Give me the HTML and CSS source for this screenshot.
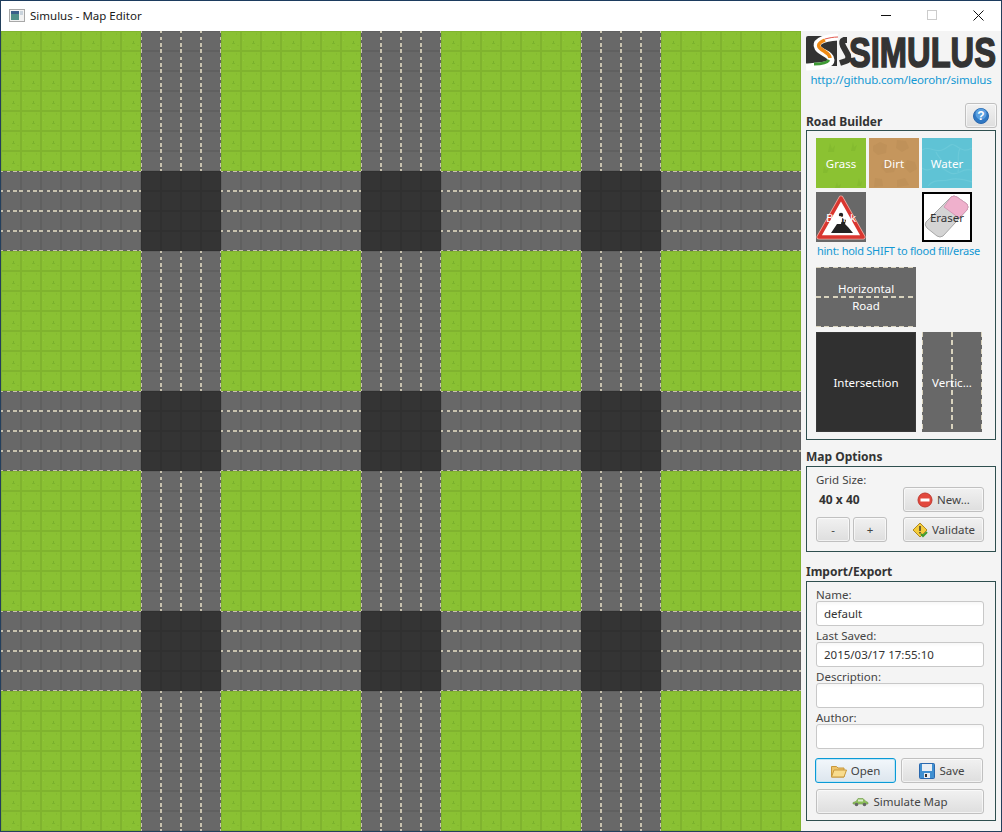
FILE: index.html
```html
<!DOCTYPE html>
<html lang="en">
<head>
<meta charset="utf-8">
<title>Simulus - Map Editor</title>
<link rel="stylesheet" href="styles.css">
</head>
<body>
<div class="window">
  <header class="titlebar">
    <svg class="app-icon" width="16" height="13" viewBox="0 0 16 13"><rect x=".5" y=".5" width="15" height="12" fill="#f2f2f2" stroke="#a8a8a8"/><rect x="2" y="2" width="8" height="9" fill="#4f8f88"/><rect x="2" y="2" width="8" height="3" fill="#3a5f8a"/><rect x="11" y="2" width="3" height="4" fill="#c9d3dc"/></svg>
    <span class="title">Simulus - Map Editor</span>
    <div class="win-controls">
      <span class="ctl"><svg width="10" height="10" viewBox="0 0 10 10"><rect x="0" y="5" width="10" height="1" fill="#111"/></svg></span>
      <span class="ctl"><svg width="10" height="10" viewBox="0 0 10 10"><rect x=".5" y=".5" width="9" height="9" fill="none" stroke="#ccc"/></svg></span>
      <span class="ctl"><svg width="11" height="11" viewBox="0 0 11 11"><path d="M.5.5l10 10M10.5.5l-10 10" stroke="#111" fill="none"/></svg></span>
    </div>
  </header>
  <div class="main">
    <svg class="map" width="800" height="800" viewBox="0 0 800 800" shape-rendering="crispEdges">
      <defs>
        <pattern id="grass" width="20" height="20" patternUnits="userSpaceOnUse">
          <rect width="20" height="20" fill="#8ac133"/>
          <rect x="3" y="3" width="2" height="1" fill="#85bc30"/>
          <rect x="15" y="2" width="1" height="2" fill="#84ba30"/>
          <rect x="5" y="15" width="2" height="1" fill="#85bc30"/>
          <rect x="16" y="14" width="2" height="1" fill="#84ba30"/>
          <rect x="12" y="10" width="1" height="2" fill="#79b02c"/>
          <rect x="11" y="12" width="3" height="1" fill="#7cb42d"/>
          <rect x="2" y="9" width="1" height="1" fill="#92c740"/>
          <rect x="9" y="17" width="1" height="1" fill="#92c740"/>
        </pattern>
        <pattern id="road-v" width="20" height="20" patternUnits="userSpaceOnUse">
          <rect width="20" height="20" fill="#686868"/>
          <path d="M.5 0v2M.5 5.500v3.500M.5 12v3.500M.5 18v2M19.500 0v2M19.500 5.500v3.500M19.500 12v3.500M19.500 18v2" stroke="#d8d2bd" fill="none"/>
        </pattern>
        <pattern id="road-h" width="20" height="20" patternUnits="userSpaceOnUse">
          <rect width="20" height="20" fill="#686868"/>
          <path d="M0 .5h2M5.500 .5h3.500M12 .5h3.500M18 .5h2M0 19.500h2M5.500 19.500h3.500M12 19.500h3.500M18 19.500h2" stroke="#d8d2bd" fill="none"/>
        </pattern>
        <pattern id="grid" width="20" height="20" patternUnits="userSpaceOnUse">
          <rect x=".5" y=".5" width="19" height="19" fill="none" stroke="#000" stroke-opacity=".075"/>
        </pattern>
      </defs>
      <rect width="800" height="800" fill="url(#grass)"/>
      <g fill="url(#road-v)">
        <rect x="140" width="80" height="800"/>
        <rect x="360" width="80" height="800"/>
        <rect x="580" width="80" height="800"/>
      </g>
      <g fill="url(#road-h)">
        <rect y="140" width="800" height="80"/>
        <rect y="360" width="800" height="80"/>
        <rect y="580" width="800" height="80"/>
      </g>
      <g fill="#343434">
        <rect x="140" y="140" width="80" height="80"/><rect x="360" y="140" width="80" height="80"/><rect x="580" y="140" width="80" height="80"/>
        <rect x="140" y="360" width="80" height="80"/><rect x="360" y="360" width="80" height="80"/><rect x="580" y="360" width="80" height="80"/>
        <rect x="140" y="580" width="80" height="80"/><rect x="360" y="580" width="80" height="80"/><rect x="580" y="580" width="80" height="80"/>
      </g>
      <rect width="800" height="800" fill="url(#grid)"/>
    </svg>
    <aside class="side">
      <svg class="logo" width="191" height="33" viewBox="0 0 191 33">
        <path d="M0 3q0-2 2-2h29v30H2q-2 0-2-2z" fill="#333"/>
        <path d="M32 2C14 3 9 8 12 13s13 6 13 12-12 6-25 7" fill="none" stroke="#fff" stroke-width="7"/>
        <path d="M19 5C12 8 11 11 15 14s9 5 9 9" fill="none" stroke="#f08a14" stroke-width="3.500"/>
        <path d="M8 29c6 0 13-1 15-4" fill="none" stroke="#3f9a35" stroke-width="3"/>
        <path d="M19 4c4-1 8-2 13-2" fill="none" stroke="#e2574c" stroke-width="1"/>
        <path d="M41 5h-3q-3 1-1 6l5 9q1 5-2 6l-6 2" fill="none" stroke="#333" stroke-width="6"/>
        <text class="logo-text" x="43" y="32" textLength="147" lengthAdjust="spacingAndGlyphs">SIMULUS</text>
      </svg>
      <a class="link" href="#">http://github.com/leorohr/simulus</a>
      <div class="road-head">
        <h2 class="heading">Road Builder</h2>
        <button class="btn help" type="button" aria-label="Help">
          <svg width="18" height="18" viewBox="0 0 18 18"><circle cx="9" cy="9" r="7.500" fill="#2f78c4" stroke="#2a68ae"/><circle cx="9" cy="7" r="5.500" fill="#5aa0e0"/><text class="q" x="9" y="13" text-anchor="middle">?</text></svg>
        </button>
      </div>
      <section class="group road-group">
        <div class="tile-row">
          <div class="tile grass">
            <svg class="tile-art" width="50" height="50" viewBox="0 0 50 50"><path d="M14 5l2 6 3-4-1 7h-6zM37 4l1 5 3-2-2 6h-4zM8 28l2 4 3-2-2 5H7zM21 44l1 4 3-2-1 4h-5zM43 40l1 5 2-2-1 5h-4z" fill="#84bb2f"/></svg>
            <span>Grass</span>
          </div>
          <div class="tile dirt">
            <svg class="tile-art" width="50" height="50" viewBox="0 0 50 50"><g fill="#bf9159"><path d="M4 8l7-4 7 3-1 8-8 2-5-4zM28 2l9 1 3 7-7 4-6-4zM14 24l8-3 6 5-3 8-8 1-5-6zM38 22l8 2 2 7-7 4-6-6zM6 40l7 1 1 7-9 1zM28 42l8-2 4 7-12 2z"/></g></svg>
            <span>Dirt</span>
          </div>
          <div class="tile water">
            <svg class="tile-art" width="50" height="50" viewBox="0 0 50 50"><path d="M0 12c8-5 12 3 20 0s8-8 14-4 10 6 16 2M0 30c6 6 14-4 20 0s10 8 18 4 8-2 12-2M6 48c6-8 14-4 20-6s12-2 24 2M14 14c2 6 8 8 8 16M38 10c-4 8 0 14-2 24" fill="none" stroke="#6bc9d9" stroke-width="1.200"/></svg>
            <span>Water</span>
          </div>
        </div>
        <div class="tile-row row-two">
          <div class="tile blank">
            <svg class="tile-art" width="50" height="50" viewBox="0 0 50 50"><path d="M25 6L47 45H3z" fill="#fff" stroke="#f0a8a0" stroke-width="5" stroke-linejoin="round"/><path d="M25 6L47 45H3z" fill="#fff" stroke="#d9362f" stroke-width="3.500" stroke-linejoin="round"/><path d="M15 41l6-9 4 0 1-6 4 2-1 4 3 3 5 6z" fill="#222"/><circle cx="25" cy="23" r="2.200" fill="#222"/></svg>
            <span>Blank</span>
          </div>
          <div class="tile empty"></div>
          <div class="tile eraser">
            <svg class="tile-art" width="46" height="46" viewBox="0 0 46 46"><path d="M2 28L27 3q3-2 6 0l10 7q2 3 0 6L19 42q-3 2-6 0L3 34q-3-3-1-6z" fill="#d4d4d4" stroke="#a8a8a8"/><path d="M20 13L27 3q3-2 6 0l10 7q2 3 0 6l-8 8z" fill="#efb0cc" stroke="#d49ab6"/></svg>
            <span>Eraser</span>
          </div>
        </div>
        <p class="hint">hint: hold SHIFT to flood fill/erase</p>
        <div class="tile horizontal"><span>Horizontal<br>Road</span></div>
        <div class="tile-row row-large">
          <div class="tile intersection"><span>Intersection</span></div>
          <div class="tile vertical"><span>Vertic...</span></div>
        </div>
      </section>
      <h2 class="heading map-head">Map Options</h2>
      <section class="group map-group">
        <div class="map-left">
          <span class="label">Grid Size:</span>
          <strong class="size">40 x 40</strong>
          <div class="stepper">
            <button class="btn step" type="button">-</button>
            <button class="btn step" type="button">+</button>
          </div>
        </div>
        <div class="map-right">
          <button class="btn" type="button">
            <svg width="16" height="16" viewBox="0 0 16 16"><circle cx="8" cy="8" r="7" fill="#e2483d" stroke="#c03a30"/><rect x="3.500" y="6.500" width="9" height="3" fill="#fff"/></svg>
            New...
          </button>
          <button class="btn" type="button">
            <svg width="16" height="16" viewBox="0 0 16 16"><path d="M8 1l7 7-7 7-7-7z" fill="#f4cc3c" stroke="#b08a20"/><rect x="7.300" y="4" width="1.400" height="5" fill="#333"/><rect x="7.300" y="10" width="1.400" height="1.500" fill="#333"/><path d="M9 12l2 2 4-4" fill="none" stroke="#3d9a2a" stroke-width="2"/></svg>
            Validate
          </button>
        </div>
      </section>
      <h2 class="heading io-head">Import/Export</h2>
      <section class="group io-group">
        <label class="label field-label" for="f-name">Name:</label>
        <input class="field" id="f-name" value="default">
        <label class="label field-label" for="f-saved">Last Saved:</label>
        <input class="field" id="f-saved" value="2015/03/17 17:55:10">
        <label class="label field-label" for="f-desc">Description:</label>
        <input class="field" id="f-desc">
        <label class="label field-label" for="f-author">Author:</label>
        <input class="field" id="f-author">
        <div class="io-buttons">
          <button class="btn open" type="button">
            <svg width="16" height="14" viewBox="0 0 16 14"><path d="M.5 2.500h5l1.500 1.500h6v9H.5z" fill="#eec46a" stroke="#c8983c"/><path d="M.5 13L3 6h12.500l-2.500 7z" fill="#f8dc8e" stroke="#c8983c"/></svg>
            Open
          </button>
          <button class="btn save" type="button">
            <svg width="16" height="16" viewBox="0 0 16 16"><rect x=".5" y=".5" width="15" height="15" rx="1" fill="#3f8fd0" stroke="#2a68ae"/><rect x="3" y="1" width="10" height="7" fill="#e8eef4"/><rect x="5" y="10" width="6" height="5" fill="#e8eef4"/><rect x="6" y="11" width="2" height="3" fill="#333"/></svg>
            Save
          </button>
        </div>
        <button class="btn simulate" type="button">
          <svg width="17" height="10" viewBox="0 0 17 10"><path d="M1 7V5.500l3-1 2-3h5l3 3 2 1V7z" fill="#8dbf5a" stroke="#6f9a4a" stroke-width=".6"/><rect x="6" y="2.500" width="5" height="2" fill="#dcebcf"/><circle cx="4.500" cy="7.500" r="1.800" fill="#666"/><circle cx="12.500" cy="7.500" r="1.800" fill="#666"/></svg>
          Simulate Map
        </button>
      </section>
    </aside>
  </div>
</div>
</body>
</html>
```

FILE: styles.css
```css
* { box-sizing: border-box; }

html, body {
  margin: 0;
  padding: 0;
  width: 1002px;
  height: 832px;
  overflow: hidden;
  background: #fff;
}

body {
  font-family: "Noto Sans", "Open Sans", sans-serif;
  font-size: 11.500px;
  color: #333;
}

.window {
  width: 1002px;
  height: 832px;
  border: 1px solid #233f5c;
  border-top-color: #1c3b5e;
  display: flex;
  flex-direction: column;
}

.titlebar {
  height: 30px;
  flex: none;
  background: #fff;
  display: flex;
  align-items: center;
  padding-left: 8px;
}

.app-icon { flex: none; margin-top: -1px; }

.title {
  margin-left: 5px;
  color: #1a1a1a;
  margin-top: -2px;
}

.win-controls {
  margin-left: auto;
  display: flex;
  margin-top: -2px;
}

.ctl {
  width: 46px;
  height: 29px;
  display: flex;
  align-items: center;
  justify-content: center;
}

.main {
  display: flex;
  height: 800px;
}

.map {
  display: block;
  flex: none;
}

.side {
  width: 200px;
  flex: none;
  background: #f4f4f4;
  padding: 4px 5px 0;
  display: flex;
  flex-direction: column;
}

.logo {
  display: block;
  flex: none;
  overflow: visible;
}

.logo-text {
  font-family: "Liberation Sans", sans-serif;
  font-weight: 700;
  font-size: 42px;
  fill: #333;
  stroke: #333;
  stroke-width: 1.5px;
}

.link {
  display: block;
  margin-top: 4px;
  height: 16px;
  line-height: 16px;
  text-align: center;
  color: #1398d3;
  text-decoration: none;
  white-space: nowrap;
  letter-spacing: -.15px;
}

.road-head {
  margin-top: 15px;
  height: 27px;
  display: flex;
  justify-content: space-between;
  align-items: flex-start;
}

.heading {
  margin: 0;
  font-size: 12px;
  font-weight: 700;
  line-height: 16px;
  color: #333;
}

.road-head .heading { align-self: flex-end; }

.help {
  width: 32px;
  height: 24px;
  margin-right: -1px;
}

.q {
  font-family: "Liberation Sans", sans-serif;
  font-weight: 700;
  font-size: 12px;
  fill: #fff;
}

.group {
  border: 1px solid #2f4f4f;
  width: 190px;
}

.road-group {
  height: 310px;
  padding: 7px 9px;
}

.tile-row {
  display: flex;
  gap: 3px;
}

.row-two { margin-top: 4px; }

.row-large {
  margin-top: 5px;
  gap: 6px;
}

.tile {
  position: relative;
  width: 50px;
  height: 50px;
  display: flex;
  align-items: center;
  justify-content: center;
  text-align: center;
  color: #fff;
  flex: none;
  overflow: hidden;
}

.tile span { position: relative; }

.tile-art {
  position: absolute;
  top: 0;
  left: 0;
}

.grass { background: #8bc232; }
.dirt { background: #c5965d; }
.water { background: #5fc3d5; }
.blank { background: #686868; }
.empty { background: none; }

.eraser {
  background: #fff;
  border: 2px solid #000;
  color: #333;
}

.hint {
  margin: 1px 0 8px 1px;
  height: 16px;
  line-height: 16px;
  font-size: 11px;
  color: #1398d3;
  white-space: nowrap;
  letter-spacing: -.26px;
}

.horizontal {
  width: 100px;
  height: 60px;
  line-height: 17px;
  background-color: #686868;
  background-image:
    repeating-linear-gradient(90deg, #d8d2bd 0 5px, transparent 5px 8.330px),
    repeating-linear-gradient(90deg, #d8d2bd 0 5px, transparent 5px 8.330px),
    repeating-linear-gradient(90deg, #d8d2bd 0 5px, transparent 5px 8.330px);
  background-size: 100% 1px, 100% 2px, 100% 1px;
  background-position: 0 0, 0 29px, 0 59px;
  background-repeat: no-repeat;
}

.intersection {
  width: 100px;
  height: 100px;
  background: #303030;
  border: 1px solid #3a3a3a;
}

.vertical {
  width: 60px;
  height: 100px;
  background-color: #686868;
  background-image:
    repeating-linear-gradient(#d8d2bd 0 5px, transparent 5px 8.330px),
    repeating-linear-gradient(#d8d2bd 0 5px, transparent 5px 8.330px),
    repeating-linear-gradient(#d8d2bd 0 5px, transparent 5px 8.330px);
  background-size: 1px 100%, 2px 100%, 1px 100%;
  background-position: 0 0, 29px 0, 59px 0;
  background-repeat: no-repeat;
}

.map-head { margin-top: 9px; }

.map-group {
  margin-top: 1px;
  height: 86px;
  padding: 5px 11px 9px 9px;
  display: flex;
  justify-content: space-between;
}

.map-left, .map-right {
  display: flex;
  flex-direction: column;
}

.map-left { width: 71px; }

.map-right {
  width: 81px;
  justify-content: flex-end;
  gap: 5px;
}

.label { color: #444; }

.map-left .label {
  height: 16px;
  line-height: 16px;
}

.size {
  margin: 4px 0 0 3px;
  height: 16px;
  line-height: 16px;
  font-size: 12px;
  font-weight: 700;
  color: #333;
}

.stepper {
  margin-top: auto;
  display: flex;
  justify-content: space-between;
}

.btn {
  height: 25px;
  padding: 0;
  border: 1px solid #c0c0c0;
  border-radius: 3px;
  background: linear-gradient(#f1f1f1, #dedede);
  box-shadow: inset 0 0 0 1px rgba(255, 255, 255, .6);
  font: inherit;
  color: #444;
  display: flex;
  align-items: center;
  justify-content: center;
  gap: 4px;
}

.step { width: 34px; }

.io-head { margin-top: 12px; }

.io-group {
  margin-top: 1px;
  height: 240px;
  padding: 3px 11px 0 9px;
}

.field-label {
  display: block;
  height: 16px;
  padding-top: 4px;
  line-height: 12px;
}

.field {
  display: block;
  width: 168px;
  height: 25px;
  padding: 0 7px;
  border: 1px solid #c8c8c8;
  border-radius: 3px;
  background: linear-gradient(#f7f7f7, #fff 4px);
  font: inherit;
  color: #333;
  outline: none;
}

.io-buttons {
  margin: 9px 0 0 -1px;
  display: flex;
  gap: 5px;
}

.open {
  width: 81px;
  border-color: #0a9ad6;
  background: linear-gradient(#f2f7fb, #dde6ee);
  box-shadow: inset 0 0 0 1px #bfe5f5;
}

.save { width: 82px; }

.simulate {
  margin-top: 6px;
  width: 168px;
}
```
